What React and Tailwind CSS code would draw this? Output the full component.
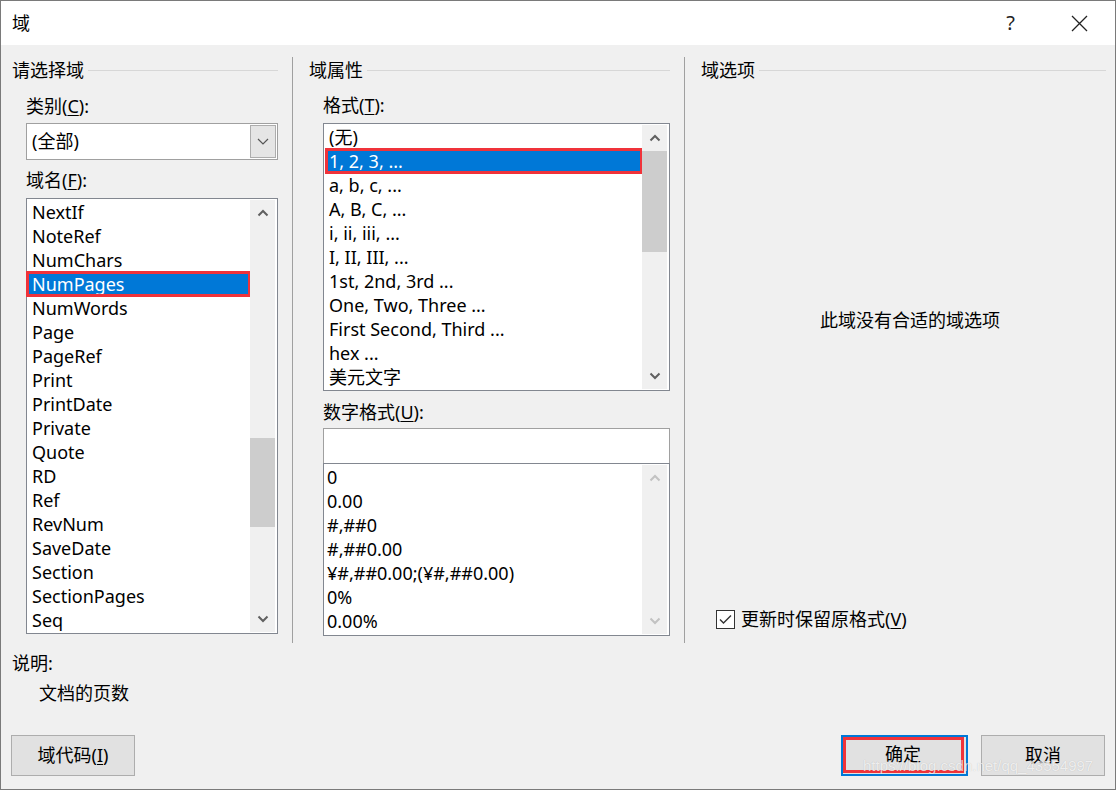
import React from 'react';

const fieldNames = ['NextIf', 'NoteRef', 'NumChars', 'NumPages', 'NumWords', 'Page', 'PageRef', 'Print', 'PrintDate', 'Private', 'Quote', 'RD', 'Ref', 'RevNum', 'SaveDate', 'Section', 'SectionPages', 'Seq'];
const formats = ['(无)', '1, 2, 3, ...', 'a, b, c, ...', 'A, B, C, ...', 'i, ii, iii, ...', 'I, II, III, ...', '1st, 2nd, 3rd ...', 'One, Two, Three ...', 'First Second, Third ...', 'hex ...', '美元文字'];
const numFormats = ['0', '0.00', '#,##0', '#,##0.00', '¥#,##0.00;(¥#,##0.00)', '0%', '0.00%'];

const Chevron = ({ up, color = '#606060' }) => (
  <svg width="12" height="8" viewBox="0 0 12 8">
    <path d={up ? 'M1.5 6.5 L6 2 L10.5 6.5' : 'M1.5 1.5 L6 6 L10.5 1.5'} fill="none" stroke={color} strokeWidth="2" />
  </svg>
);

const ScrollBar = ({ gap, thumb, disabled }) => {
  const c = disabled ? '#c2c2c2' : '#606060';
  return (
    <div className="w-[25px] my-px mr-[2px] bg-[#f0f0f0] flex flex-col">
      <div className="h-[26px] flex items-center justify-center"><Chevron up color={c} /></div>
      {gap > 0 && <div style={{ height: gap }} />}
      {thumb > 0 && <div className="bg-[#cdcdcd]" style={{ height: thumb }} />}
      <div className="flex-1" />
      <div className="h-[26px] flex items-center justify-center"><Chevron color={c} /></div>
    </div>
  );
};

const Label = ({ text, k, className = '' }) => (
  <div className={`h-[24px] leading-[24px] text-[18px] ${className}`}>
    {text}(<u className="underline-offset-2">{k}</u>):
  </div>
);

const Header = ({ text, pl, pr }) => (
  <div className="h-[26px] flex items-center" style={{ paddingLeft: pl, paddingRight: pr }}>
    <span className="text-[18px] leading-[24px]">{text}</span>
    <div className="flex-1 h-px bg-[#d7d7d7] ml-[4px] mt-px" />
  </div>
);

const selected = 'bg-[#0078d7] text-white outline-[3px] outline-[#f0333a] -outline-offset-2';

export default function App() {
  return (
    <div className="w-[1116px] h-[790px] bg-[#f0f0f0] border border-[#7a7a7a] flex flex-col text-[#000] font-['Noto_Sans','Noto_Sans_CJK_SC',sans-serif] relative overflow-hidden">
      {/* title bar */}
      <div className="h-[44px] bg-white flex items-center shrink-0">
        <span className="ml-[11px] text-[18px]">域</span>
        <div className="flex-1" />
        <span className="text-[20px] mr-[56px] text-[#222]">?</span>
        <svg width="17" height="17" viewBox="0 0 17 17" className="mr-[27px]">
          <path d="M1 1 L16 16 M16 1 L1 16" stroke="#222" strokeWidth="1.3" />
        </svg>
      </div>

      {/* columns */}
      <div className="flex mt-[12px] h-[586px]">
        {/* left */}
        <div className="w-[291px] flex flex-col">
          <Header text="请选择域" pl={11} pr={14} />
          <div className="pl-[25px] pr-[14px] flex flex-col">
            <Label text="类别" k="C" className="mt-[11px]" />
            <div className="mt-[5px] h-[37px] bg-white border border-[#a0a0a0] flex items-center">
              <span className="flex-1 pl-[5px] text-[18px]">(全部)</span>
              <div className="w-[26px] h-[33px] mr-px bg-[#e5e5e5] border border-[#adadad] flex items-center justify-center">
                <svg width="12" height="7" viewBox="0 0 12 7"><path d="M1 1 L6 6 L11 1" fill="none" stroke="#555" strokeWidth="1.2" /></svg>
              </div>
            </div>
            <Label text="域名" k="F" className="mt-[8px]" />
            <div className="mt-[6px] h-[436px] bg-white border border-[#828790] flex">
              <div className="flex-1 pt-px">
                {fieldNames.map((n) => (
                  <div key={n} className={`h-[24px] leading-[24px] text-[18px] pl-[5px] ${n === 'NumPages' ? selected : ''}`}>{n}</div>
                ))}
              </div>
              <ScrollBar gap={212} thumb={89} />
            </div>
          </div>
        </div>
        <div className="w-px bg-[#a0a0a0]" />

        {/* middle */}
        <div className="w-[391px] flex flex-col">
          <Header text="域属性" pl={16} pr={14} />
          <div className="pl-[30px] pr-[14px] flex flex-col">
            <Label text="格式" k="T" className="mt-[10px]" />
            <div className="mt-[6px] h-[268px] bg-white border border-[#828790] flex">
              <div className="flex-1 pt-px pl-[2px]">
                {formats.map((n, i) => (
                  <div key={n} className={`h-[24px] leading-[24px] text-[18px] pl-[3px] ${i === 1 ? selected : ''}`}>{n}</div>
                ))}
              </div>
              <ScrollBar gap={0} thumb={101} />
            </div>
            <Label text="数字格式" k="U" className="mt-[9px]" />
            <div className="mt-[4px] h-[36px] bg-white border border-[#a0a0a0]" />
            <div className="-mt-px h-[173px] bg-white border border-[#828790] flex">
              <div className="flex-1 pt-px">
                {numFormats.map((n) => (
                  <div key={n} className="h-[24px] leading-[24px] text-[18px] pl-[3px] whitespace-nowrap">{n}</div>
                ))}
              </div>
              <ScrollBar gap={0} thumb={0} disabled />
            </div>
          </div>
        </div>
        <div className="w-px bg-[#a0a0a0]" />

        {/* right */}
        <div className="flex-1 flex flex-col">
          <Header text="域选项" pl={16} pr={9} />
          <div className="flex-1 flex items-center justify-center pl-[20px] pb-[48px]">
            <span className="text-[18px]">此域没有合适的域选项</span>
          </div>
          <div className="flex items-center pl-[31px] mb-[10px]">
            <div className="w-[19px] h-[19px] bg-white border border-[#333] flex items-center justify-center">
              <svg width="13" height="11" viewBox="0 0 13 11"><path d="M1 5.5 L4.5 9 L12 1.5" fill="none" stroke="#333" strokeWidth="1.4" /></svg>
            </div>
            <span className="ml-[6px] text-[18px]">更新时保留原格式(<u className="underline-offset-2">V</u>)</span>
          </div>
        </div>
      </div>

      {/* description */}
      <div className="pl-[11px] mt-[8px] text-[18px] leading-[24px]">说明:</div>
      <div className="pl-[38px] mt-[6px] text-[18px] leading-[24px]">文档的页数</div>

      {/* buttons */}
      <div className="flex items-center mt-[30px] pl-[10px] pr-[10px]">
        <div className="w-[124px] h-[41px] bg-[#e1e1e1] border border-[#adadad] flex items-center justify-center text-[18px]">
          域代码(<u className="underline-offset-2">I</u>)
        </div>
        <div className="flex-1" />
        <div className="w-[127px] h-[41px] bg-[#e1e1e1] border-2 border-[#0078d7] flex items-center justify-center text-[18px]">
          <div className="w-[121px] h-[36px] -ml-[3px] -mt-[2px] border-[3px] border-[#f0333a] flex items-center justify-center">确定</div>
        </div>
        <div className="w-[124px] h-[41px] ml-[13px] bg-[#e1e1e1] border border-[#adadad] flex items-center justify-center text-[18px]">
          取消
        </div>
      </div>

      <div className="absolute left-[862px] top-[755px] text-[15px] leading-[20px] font-['Liberation_Sans',sans-serif] text-white/75 [text-shadow:0_0_1px_rgba(0,0,0,0.2)] pointer-events-none whitespace-nowrap">
        https://blog.csdn.net/qq_43554997
      </div>
    </div>
  );
}
